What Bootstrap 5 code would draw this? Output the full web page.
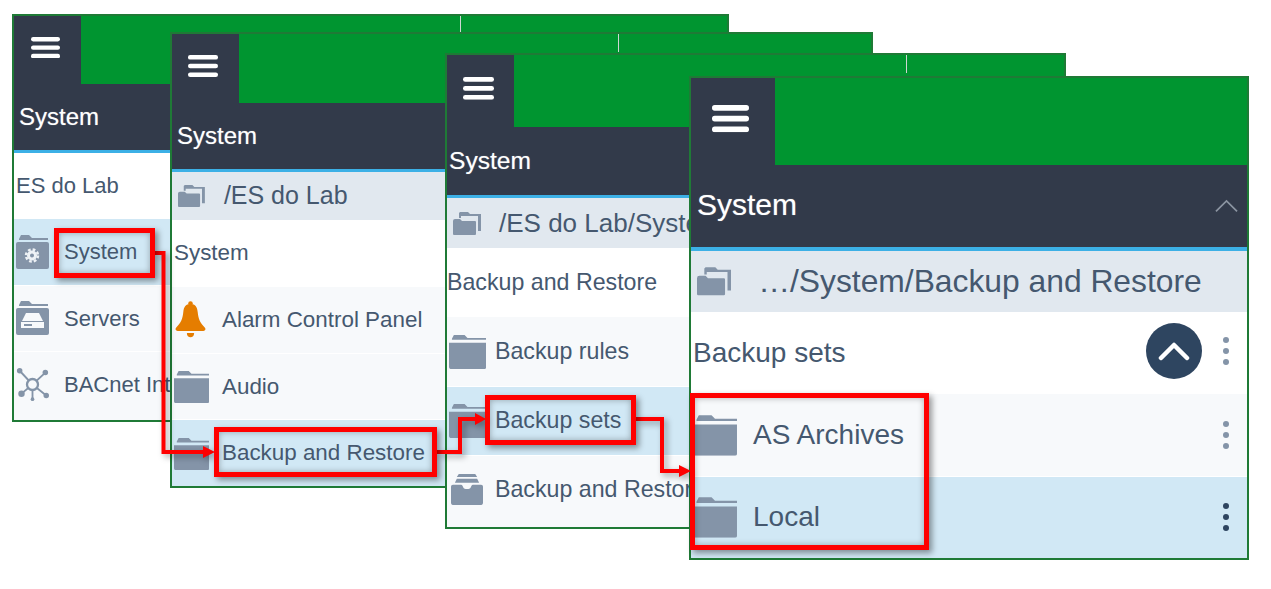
<!DOCTYPE html>
<html lang="en">
<head>
<meta charset="UTF-8">
<meta name="viewport" content="width=device-width, initial-scale=1.0">
<title>Backup sets navigation</title>
<link href="https://cdn.jsdelivr.net/npm/bootstrap@5.3.0/dist/css/bootstrap.min.css" rel="stylesheet">
<style>
body { background: #fff; font-family: "Liberation Sans", Arial, sans-serif; color: #45586f; overflow: hidden; }
.stage { position: relative; width: 1271px; height: 589px; }

/* the four overlapping windows */
.app-win { position: absolute; border: 2px solid #1f7a36; background: #f7f9fb; display: flex; flex-direction: column; overflow: hidden; }
.win-1 { left: 12px; top: 14px; width: 717px; height: 408px; --tile-w: 67px; --top-h: 68px; --band-h: 66px; --blue-h: 3px; --sys-fs: 24px; --sys-pad: 5px; --row-fs: 22px; --icon-w: 48px; --ico: 33px; --burger: 29px; --tick: 379px; }
.win-2 { left: 170px; top: 32px; width: 703px; height: 456px; --tile-w: 67px; --top-h: 69px; --band-h: 66px; --blue-h: 3px; --crumb-h: 48px; --crumb-fs: 25px; --crumb-gap: 19px; --sys-fs: 24px; --sys-pad: 5px; --row-fs: 22.4px; --icon-w: 48px; --ico: 35px; --burger: 30px; --tick: 379px; }
.win-3 { left: 445px; top: 53px; width: 621px; height: 476px; --tile-w: 67px; --top-h: 72px; --band-h: 68px; --blue-h: 3px; --crumb-h: 50px; --crumb-fs: 26px; --crumb-gap: 18px; --sys-fs: 24.6px; --sys-pad: 2px; --row-fs: 23.2px; --icon-w: 46px; --ico: 37px; --burger: 31px; --tick: 392px; }
.win-4 { left: 689px; top: 76px; width: 560px; height: 484px; --tile-w: 84px; --top-h: 87px; --band-h: 79px; --blue-h: 4px; --crumb-h: 61px; --crumb-fs: 31.800px; --crumb-gap: 27px; --sys-fs: 30px; --sys-pad: 6px; --row-fs: 28px; --icon-w: 60px; --ico: 44px; --burger: 37px; }

.top-strip { height: var(--top-h); flex: none; }
.menu-tile { width: var(--tile-w); flex: none; background: #323a4a; padding: 0 5px 5px 0; }
.menu-tile svg { width: var(--burger); }
.green-fill { background: #009530; }
.green-tick { width: 1px; height: 18px; margin-left: var(--tick); background: #cfd6d2; }
.sys-band { height: var(--band-h); flex: none; background: #323a4a; color: #fff; font-size: var(--sys-fs); padding: 0 9px 0 var(--sys-pad); border-bottom: var(--blue-h) solid #3cb0e6; box-sizing: content-box; text-shadow: 0 0 1px rgba(255,255,255,.5); }
.win-4 .sys-band { padding-bottom: 3px; }
.crumb-bar { height: var(--crumb-h); flex: none; background: #e1e8ef; font-size: var(--crumb-fs); padding-left: 6px; gap: var(--crumb-gap); white-space: nowrap; }
.crumb-bar svg { height: 50%; aspect-ratio: 28 / 25; flex: none; }

.tree-list { flex: 1 1 0; --bs-list-group-border-color: #fff; --bs-list-group-bg: #f7f9fb; --bs-list-group-color: #45586f; border-radius: 0; }
.tree-row { flex: 1 1 0; padding: 0 0 0 2px; font-size: var(--row-fs); white-space: nowrap; min-height: 0; }
.tree-row:last-child { padding-bottom: 3px; }
.win-4 .tree-row:last-child, .win-2 .tree-row:last-child { padding-bottom: 0; }
.tree-row.title-row { background: #fff; }
.win-3 .tree-row.title-row { padding-left: 0; }
.tree-row.picked { background: #d1e8f5; }
.row-ico { width: var(--icon-w); flex: none; display: flex; align-items: center; }
.row-ico svg { width: var(--ico); height: auto; }
.row-ico svg.bell-ico { width: 31px; margin-left: 1px; }
.row-ico svg.tray-ico { width: 32px; margin-left: 2px; }
.more-dots { width: 8px; margin-right: 17px; }
.more-dots.dim { color: #8494a8; }
.more-dots.dark { color: #2e4560; }
.more-dots.up-a-bit { margin-bottom: 4px; }
.round-up { width: 56px; height: 56px; background: #2e4560; margin-right: 20px; margin-bottom: 4px; }
.thin-up { width: 23px; margin-top: 3px; }

/* red annotations */
.red-frame { position: absolute; border: 5px solid #f00; box-shadow: 3px 3px 6px rgba(0,0,0,.4), inset 0 0 6px rgba(0,0,0,.3); }
.frame-1 { left: 54px; top: 228px; width: 101px; height: 50px; }
.frame-2 { left: 214px; top: 427px; width: 223px; height: 50px; }
.frame-3 { left: 485px; top: 395px; width: 151px; height: 50px; }
.frame-4 { left: 690px; top: 393px; width: 239px; height: 157px; }
.wires { position: absolute; left: 0; top: 0; filter: drop-shadow(3px 3px 3px rgba(0,0,0,.35)); }
</style>
</head>
<body>

<svg width="0" height="0" class="d-block">
  <defs>
    <symbol id="burger" viewBox="0 0 30 22"><g fill="#fff"><rect width="30" height="4.6" rx="2.2"/><rect y="8.7" width="30" height="4.6" rx="2.2"/><rect y="17.4" width="30" height="4.6" rx="2.2"/></g></symbol>
    <symbol id="folder" viewBox="0 0 38 36"><g fill="#8494a8"><path d="M3 5 5 1h11l3 3h19v2H3z"/><path d="M0 9h38v25.500q0 1.500-1.500 1.500H2q-2 0-2-2z"/></g></symbol>
    <symbol id="folder-open" viewBox="0 0 28 25"><g fill="#8494a8"><path d="M6 7V2l1-1h8l2 2h11v17h-3V5H8v2z"/><path d="M0 10q0-2 2-2h5l2 2h13q1 0 1 1v12q0 1-1 1H1q-1 0-1-1z"/></g></symbol>
    <symbol id="folder-gear" viewBox="0 0 33 34"><g fill="#8494a8"><path d="M3 4 5 0h8l3 3h16v2H3z"/><rect y="7" width="33" height="27" rx="2"/></g><g fill="none" stroke="#eef2f6"><circle cx="16" cy="20.500" r="3.500" stroke-width="3"/><circle cx="16" cy="20.500" r="6" stroke-width="2.500" stroke-dasharray="2.700 2"/></g></symbol>
    <symbol id="folder-server" viewBox="0 0 33 34"><g fill="#8494a8"><path d="M3 4 5 0h8l3 3h16v2H3z"/><rect y="7" width="33" height="27" rx="2"/></g><path fill="#f7f9fb" d="M10 12h13l4 8H6z"/><rect x="5" y="21" width="23" height="6" fill="#f7f9fb"/><rect x="8" y="23" width="8" height="2" fill="#8494a8"/></symbol>
    <symbol id="net-nodes" viewBox="0 0 36 36"><g stroke="#8494a8" stroke-width="2" fill="none"><path d="M4 3 18 18M32 5 18 18M33 30 18 18M6 28 18 18M18 34V18"/><circle cx="18" cy="18" r="6" fill="#f7f9fb" stroke-width="2.500"/></g><g fill="#8494a8"><circle cx="4" cy="3" r="3"/><circle cx="32" cy="5" r="3"/><circle cx="33" cy="30" r="3"/><circle cx="6" cy="28" r="3.500"/><circle cx="18" cy="34" r="2"/></g></symbol>
    <symbol id="bell" viewBox="0 0 30 36"><g fill="#e57d00"><circle cx="15" cy="2.500" r="2.200"/><path d="M15 3c5 0 6.500 3 7 8 .6 6 2 10 7 15 1 1 .5 3-1.500 3h-25C.5 29 0 27 1 26c5-5 6.400-9 7-15 .5-5 2-8 7-8z"/><path d="M11.500 31h7c0 3-1.500 4-3.500 4s-3.500-1-3.500-4z"/></g></symbol>
    <symbol id="inbox-tray" viewBox="0 0 33 32"><g fill="#8494a8"><path d="M8 0h17l2 3H6zM6 5h21l2 4H4zM2 11h8.500c1 0 1.500 1 2 2.500.5 1.500 1.500 2 2.500 2h3c1 0 2-.5 2.500-2s1-2.500 2-2.500H31q2 0 2 2v17q0 2-2 2H2q-2 0-2-2V13q0-2 2-2z"/></g></symbol>
    <symbol id="kebab" viewBox="0 0 8 30"><g fill="currentColor"><circle cx="4" cy="4" r="3"/><circle cx="4" cy="15" r="3"/><circle cx="4" cy="26" r="3"/></g></symbol>
  </defs>
</svg>

<main class="stage">

  <section class="app-win win-1">
    <div class="top-strip d-flex">
      <div class="menu-tile d-flex align-items-center justify-content-center"><svg viewBox="0 0 30 22"><use href="#burger"/></svg></div>
      <div class="green-fill flex-grow-1"><div class="green-tick"></div></div>
    </div>
    <div class="sys-band d-flex align-items-center">System</div>
    <ul class="tree-list list-group list-group-flush">
      <li class="tree-row title-row list-group-item d-flex align-items-center">ES do Lab</li>
      <li class="tree-row picked list-group-item d-flex align-items-center"><span class="row-ico"><svg viewBox="0 0 33 34"><use href="#folder-gear"/></svg></span>System</li>
      <li class="tree-row list-group-item d-flex align-items-center"><span class="row-ico"><svg viewBox="0 0 33 34"><use href="#folder-server"/></svg></span>Servers</li>
      <li class="tree-row list-group-item d-flex align-items-center"><span class="row-ico"><svg viewBox="0 0 36 36"><use href="#net-nodes"/></svg></span>BACnet Interfaces</li>
    </ul>
  </section>

  <section class="app-win win-2">
    <div class="top-strip d-flex">
      <div class="menu-tile d-flex align-items-center justify-content-center"><svg viewBox="0 0 30 22"><use href="#burger"/></svg></div>
      <div class="green-fill flex-grow-1"><div class="green-tick"></div></div>
    </div>
    <div class="sys-band d-flex align-items-center">System</div>
    <div class="crumb-bar d-flex align-items-center"><svg viewBox="0 0 28 25"><use href="#folder-open"/></svg>/ES do Lab</div>
    <ul class="tree-list list-group list-group-flush">
      <li class="tree-row title-row list-group-item d-flex align-items-center">System</li>
      <li class="tree-row list-group-item d-flex align-items-center"><span class="row-ico"><svg class="bell-ico" viewBox="0 0 30 36"><use href="#bell"/></svg></span>Alarm Control Panel</li>
      <li class="tree-row list-group-item d-flex align-items-center"><span class="row-ico"><svg viewBox="0 0 38 36"><use href="#folder"/></svg></span>Audio</li>
      <li class="tree-row picked list-group-item d-flex align-items-center"><span class="row-ico"><svg viewBox="0 0 38 36"><use href="#folder"/></svg></span>Backup and Restore</li>
    </ul>
  </section>

  <section class="app-win win-3">
    <div class="top-strip d-flex">
      <div class="menu-tile d-flex align-items-center justify-content-center"><svg viewBox="0 0 30 22"><use href="#burger"/></svg></div>
      <div class="green-fill flex-grow-1"><div class="green-tick"></div></div>
    </div>
    <div class="sys-band d-flex align-items-center">System</div>
    <div class="crumb-bar d-flex align-items-center"><svg viewBox="0 0 28 25"><use href="#folder-open"/></svg>/ES do Lab/System</div>
    <ul class="tree-list list-group list-group-flush">
      <li class="tree-row title-row list-group-item d-flex align-items-center">Backup and Restore</li>
      <li class="tree-row list-group-item d-flex align-items-center"><span class="row-ico"><svg viewBox="0 0 38 36"><use href="#folder"/></svg></span>Backup rules</li>
      <li class="tree-row picked list-group-item d-flex align-items-center"><span class="row-ico"><svg viewBox="0 0 38 36"><use href="#folder"/></svg></span>Backup sets</li>
      <li class="tree-row list-group-item d-flex align-items-center"><span class="row-ico"><svg class="tray-ico" viewBox="0 0 33 32"><use href="#inbox-tray"/></svg></span>Backup and Restore</li>
    </ul>
  </section>

  <section class="app-win win-4">
    <div class="top-strip d-flex">
      <div class="menu-tile d-flex align-items-center justify-content-center"><svg viewBox="0 0 30 22"><use href="#burger"/></svg></div>
      <div class="green-fill flex-grow-1"></div>
    </div>
    <div class="sys-band d-flex align-items-center justify-content-between">System
      <svg class="thin-up" viewBox="0 0 24 14"><path d="M1 13 12 2l11 11" fill="none" stroke="#8b94a1" stroke-width="1.800"/></svg>
    </div>
    <div class="crumb-bar d-flex align-items-center"><svg viewBox="0 0 28 25"><use href="#folder-open"/></svg>…/System/Backup and Restore</div>
    <ul class="tree-list list-group list-group-flush">
      <li class="tree-row title-row list-group-item d-flex align-items-center">Backup sets
        <span class="round-up rounded-circle ms-auto d-flex align-items-center justify-content-center"><svg width="32" height="20" viewBox="0 0 32 20"><path d="M3 17 16 4l13 13" fill="none" stroke="#fff" stroke-width="4.500" stroke-linecap="round" stroke-linejoin="round"/></svg></span>
        <svg class="more-dots dim up-a-bit" viewBox="0 0 8 30"><use href="#kebab"/></svg>
      </li>
      <li class="tree-row list-group-item d-flex align-items-center"><span class="row-ico"><svg viewBox="0 0 38 36"><use href="#folder"/></svg></span>AS Archives
        <svg class="more-dots dim ms-auto" viewBox="0 0 8 30"><use href="#kebab"/></svg>
      </li>
      <li class="tree-row picked list-group-item d-flex align-items-center"><span class="row-ico"><svg viewBox="0 0 38 36"><use href="#folder"/></svg></span>Local
        <svg class="more-dots dark ms-auto" viewBox="0 0 8 30"><use href="#kebab"/></svg>
      </li>
    </ul>
  </section>

  <svg class="wires" width="1271" height="589" viewBox="0 0 1271 589">
    <g fill="none" stroke="#f00" stroke-width="4">
      <path d="M155 253H163.500V452H204"/>
      <path d="M437 452H460V419H476"/>
      <path d="M636 419H662V471H680"/>
    </g>
    <g fill="#f00">
      <path d="M203 446 215 452 203 458z"/>
      <path d="M475 413 486 419 475 425z"/>
      <path d="M679 465 691 471 679 477z"/>
    </g>
  </svg>

  <div class="red-frame frame-1"></div>
  <div class="red-frame frame-2"></div>
  <div class="red-frame frame-3"></div>
  <div class="red-frame frame-4"></div>
</main>

<script src="https://cdn.jsdelivr.net/npm/bootstrap@5.3.0/dist/js/bootstrap.bundle.min.js"></script>
</body>
</html>
